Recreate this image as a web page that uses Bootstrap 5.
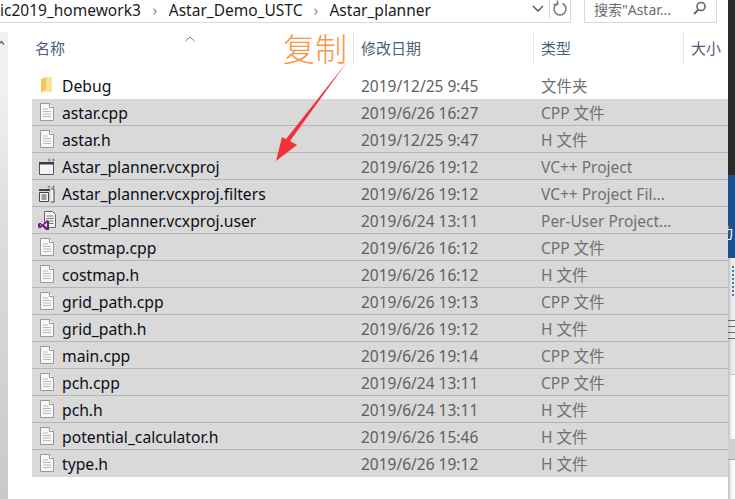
<!DOCTYPE html>
<html lang="zh">
<head>
<meta charset="utf-8">
<title>Astar_planner</title>
<link href="https://cdn.jsdelivr.net/npm/bootstrap@5.3.0/dist/css/bootstrap.min.css" rel="stylesheet">
<style>
html,body{margin:0;background:#fff;overflow:hidden}
.shot{width:735px;height:499px;font-family:"Noto Sans","Noto Sans CJK SC",sans-serif;font-size:15.5px;color:#1b1b1b;overflow:hidden}
.edge-left{width:8px;background:linear-gradient(#f0f0f0 0 60px,#dcdcdc 200px,#c9c9c9);margin-top:32px;flex:none;position:relative}
.edge-left svg{display:block;margin-top:8px}
.edge-gap{width:24px;flex:none}
.main-col{width:696px;flex:none}
.edge-right{width:7px;flex:none;background:linear-gradient(90deg,#bdbdbd,#e6e6e6 45%,#f0f0f0);overflow:hidden}
.er-dark{height:175px;background:#2a2a2a}
.er-blue{height:83px;background:#1f4e8f;color:#fff;font-size:15px;line-height:20px;padding-top:47px;white-space:nowrap;text-indent:-10px}
.er-dots{height:32px;margin:8px 0 0 4px;width:2px;background:repeating-linear-gradient(#3d7cc0 0 2px,transparent 2px 4px)}
.er-lines{height:20px;margin-top:22px;background:repeating-linear-gradient(#666 0 1px,transparent 1px 6px)}
.er-g1{height:35px;border-bottom:1px solid #c8c8c8}
.er-white{height:64px;background:linear-gradient(90deg,#bdbdbd,#f2f2f2 45%,#fff)}
.er-g2{height:21px;background:#cfcfcf;border-bottom:1px solid #aaa}
.er-end{flex:1;background:linear-gradient(90deg,#bdbdbd,#f2f2f2 45%,#fff)}
.addr{height:23px;margin-left:-32px;width:728px;line-height:21px}
.crumbs{width:571px;border-bottom:1px solid #d9d9d9;border-right:1px solid #d9d9d9;white-space:nowrap;overflow:hidden}
.crumb-sep{color:#8a8a8a;width:28px;text-align:center;display:inline-block}
.crumb-sep.tight{width:27px}
.addr-tools{width:21px;border-left:1px solid #d9d9d9;color:#6d6d6d}
.searchbox{width:133px;margin-left:13px;border:1px solid #d9d9d9;border-top:0;color:#6d6d6d;font-size:14px;padding:0 9px;height:23px;line-height:20px}
.head-row{height:49px;padding-top:9px;color:#4c607a;font-size:15px}
.hcell{height:32px;line-height:32px;border-right:1px solid #e5e5e5;white-space:nowrap;overflow:hidden;padding-left:7px;position:relative}
.c-name{width:322px;flex:none;padding-left:3px}
.c-date{width:180px;flex:none;}
.c-type{width:150px;flex:none;}
.c-size{flex:1;border-right:0}
.sort-caret{position:absolute;left:153px;top:-2px;line-height:1}
.frow{height:27px;line-height:29px;white-space:nowrap}
.frow.sel{background:#d9d9d9;border-bottom:1px solid #b5b5b5}
.frow.sel:last-child{border-bottom:0}
.ico{width:30px;flex:none;padding:4px 0 0 8px}
.ico svg{display:block}
.ico.wide{padding-left:6px}
.fname{width:299px;flex:none;color:#0c0e16;font-size:15.7px}
.fdate{width:180px;flex:none;color:#5f5f5f}
.ftype{flex:1;color:#707070}
.note-cn{position:absolute;left:283px;top:27px;color:#f79646;font-family:"Noto Sans CJK SC",sans-serif;font-weight:300;font-size:32px;line-height:40px}
.note-arrow{position:absolute;left:270px;top:60px}
.stage{position:relative}
</style>
</head>
<body>
<svg width="0" height="0" class="d-block position-absolute">
<defs>
<symbol id="doc" viewBox="0 0 14 18"><path d="M.5.5h9l4 4v13H.5z" fill="#f7f7f7" stroke="#999"/><path d="M9.500.5v4h4" fill="#fff" stroke="#999"/><path d="M3 6h5M3 8.500h8M3 11h8M3 13.500h8" stroke="#bdbdbd"/></symbol>
<symbol id="proj" viewBox="0 0 19 19"><path d="M1.500 5.500h14v12h-14z" fill="#f4f4f4" stroke="#555"/><path d="M1 5h15v2.500H1z" fill="#3d3d3d"/><path d="M9.500 3h3M11 1.500v3M14 3h3M15.500 1.500v3" stroke="#a06ac0"/></symbol>
<symbol id="filt" viewBox="0 0 19 19"><path d="M1 5h11v2H1z" fill="#444"/><path d="M13 5h3v13h-3" fill="#f4f4f4" stroke="#444"/><path d="M1.500 8.500h9v9h-9z" fill="#f4f4f4" stroke="#444"/><path d="M3.500 11h5M3.500 13h5M3.500 15h5" stroke="#444"/><path d="M9.500 3h3M11 1.500v3M14 3h3M15.500 1.500v3" stroke="#a06ac0"/></symbol>
<symbol id="user" viewBox="0 0 19 19"><path d="M6.500.5h8l3 3v13h-11z" fill="#f4f4f4" stroke="#666"/><path d="M8.500 5h7M8.500 7.500h7M11 10h4.500M11 12.500h4.500" stroke="#777"/><path d="M0 13l2-1.500 2.500 2 4.500-4.500 2 1v9l-2 1-4.500-4.500-2.500 2-2-1.500z" fill="#68217a"/><path d="M2 13.300v2l1.200-1zM9 11.500v5l-3-2.500z" fill="#e6d5ea"/></symbol>
</defs>
</svg>
<div class="shot d-flex stage">
  <div class="edge-left"><svg width="4" height="6" viewBox="0 0 4 6"><path d="M-2 5l3.500-3.500L4 4.500" fill="none" stroke="#555" stroke-width="1.200"/></svg></div>
  <div class="edge-gap"></div>
  <div class="main-col d-flex flex-column">
    <div class="addr d-flex">
      <div class="crumbs d-flex align-items-start">
        <span>ic2019_homework3</span><span class="crumb-sep">›</span><span>Astar_Demo_USTC</span><span class="crumb-sep tight">›</span><span>Astar_planner</span>
        <span class="ms-auto d-flex"><svg width="14" height="18" viewBox="0 0 14 18"><path d="M2 6l5 5 5-5" fill="none" stroke="#555" stroke-width="1.400"/></svg>
        <span class="addr-tools ms-1 d-flex justify-content-center"><svg width="16" height="18" viewBox="0 0 16 18"><path d="M10.500 3.500a6 6 0 1 1-5 0M5.500 .5v4H1.500" fill="none" stroke="#777" stroke-width="1.500"/></svg></span></span>
      </div>
      <div class="searchbox d-flex justify-content-between">
        <span>搜索"Astar...</span>
        <svg width="15" height="18" viewBox="0 0 15 18"><circle cx="9" cy="6.500" r="4" fill="none" stroke="#666" stroke-width="1.600"/><path d="M6 10l-4 4" stroke="#666" stroke-width="2"/></svg>
      </div>
    </div>
    <div class="head-row d-flex">
      <div class="hcell c-name">名称<span class="sort-caret"><svg width="10" height="6" viewBox="0 0 10 6"><path d="M.5 5l4.500-4 4.500 4" fill="none" stroke="#7a7a7a"/></svg></span></div>
      <div class="hcell c-date">修改日期</div>
      <div class="hcell c-type">类型</div>
      <div class="hcell c-size">大小</div>
    </div>
    <div class="flex-grow-1">
      <div class="frow d-flex"><div class="ico"><svg width="14" height="18" viewBox="0 0 14 18"><path d="M1 3l5-2v13l-5 3z" fill="#f2c75c"/><path d="M6 1h6v15H1l5-2z" fill="#fbe39a"/></svg></div><div class="fname">Debug</div><div class="fdate">2019/12/25 9:45</div><div class="ftype">文件夹</div></div>
      <div class="frow sel d-flex"><div class="ico"><svg width="14" height="18"><use href="#doc"/></svg></div><div class="fname">astar.cpp</div><div class="fdate">2019/6/26 16:27</div><div class="ftype">CPP 文件</div></div>
      <div class="frow sel d-flex"><div class="ico"><svg width="14" height="18"><use href="#doc"/></svg></div><div class="fname">astar.h</div><div class="fdate">2019/12/25 9:47</div><div class="ftype">H 文件</div></div>
      <div class="frow sel d-flex"><div class="ico wide"><svg width="19" height="19"><use href="#proj"/></svg></div><div class="fname">Astar_planner.vcxproj</div><div class="fdate">2019/6/26 19:12</div><div class="ftype">VC++ Project</div></div>
      <div class="frow sel d-flex"><div class="ico wide"><svg width="19" height="19"><use href="#filt"/></svg></div><div class="fname">Astar_planner.vcxproj.filters</div><div class="fdate">2019/6/26 19:12</div><div class="ftype">VC++ Project Fil...</div></div>
      <div class="frow sel d-flex"><div class="ico wide"><svg width="19" height="19"><use href="#user"/></svg></div><div class="fname">Astar_planner.vcxproj.user</div><div class="fdate">2019/6/24 13:11</div><div class="ftype">Per-User Project...</div></div>
      <div class="frow sel d-flex"><div class="ico"><svg width="14" height="18"><use href="#doc"/></svg></div><div class="fname">costmap.cpp</div><div class="fdate">2019/6/26 16:12</div><div class="ftype">CPP 文件</div></div>
      <div class="frow sel d-flex"><div class="ico"><svg width="14" height="18"><use href="#doc"/></svg></div><div class="fname">costmap.h</div><div class="fdate">2019/6/26 16:12</div><div class="ftype">H 文件</div></div>
      <div class="frow sel d-flex"><div class="ico"><svg width="14" height="18"><use href="#doc"/></svg></div><div class="fname">grid_path.cpp</div><div class="fdate">2019/6/26 19:13</div><div class="ftype">CPP 文件</div></div>
      <div class="frow sel d-flex"><div class="ico"><svg width="14" height="18"><use href="#doc"/></svg></div><div class="fname">grid_path.h</div><div class="fdate">2019/6/26 19:12</div><div class="ftype">H 文件</div></div>
      <div class="frow sel d-flex"><div class="ico"><svg width="14" height="18"><use href="#doc"/></svg></div><div class="fname">main.cpp</div><div class="fdate">2019/6/26 19:14</div><div class="ftype">CPP 文件</div></div>
      <div class="frow sel d-flex"><div class="ico"><svg width="14" height="18"><use href="#doc"/></svg></div><div class="fname">pch.cpp</div><div class="fdate">2019/6/24 13:11</div><div class="ftype">CPP 文件</div></div>
      <div class="frow sel d-flex"><div class="ico"><svg width="14" height="18"><use href="#doc"/></svg></div><div class="fname">pch.h</div><div class="fdate">2019/6/24 13:11</div><div class="ftype">H 文件</div></div>
      <div class="frow sel d-flex"><div class="ico"><svg width="14" height="18"><use href="#doc"/></svg></div><div class="fname">potential_calculator.h</div><div class="fdate">2019/6/26 15:46</div><div class="ftype">H 文件</div></div>
      <div class="frow sel d-flex"><div class="ico"><svg width="14" height="18"><use href="#doc"/></svg></div><div class="fname">type.h</div><div class="fdate">2019/6/26 19:12</div><div class="ftype">H 文件</div></div>
    </div>
  </div>
  <div class="edge-right d-flex flex-column">
    <div class="er-dark"></div><div class="er-blue">功</div>
    <div class="er-dots"></div><div class="er-lines"></div><div class="er-g1"></div>
    <div class="er-white"></div><div class="er-g2"></div><div class="er-end"></div>
  </div>
  <div class="note-cn">复制</div>
  <svg class="note-arrow" width="90" height="105" viewBox="270 60 90 105"><path d="M347 62L290 141l7 4-21 16 6-24 4 2z" fill="#f5323c"/></svg>
</div>
</body>
</html>
